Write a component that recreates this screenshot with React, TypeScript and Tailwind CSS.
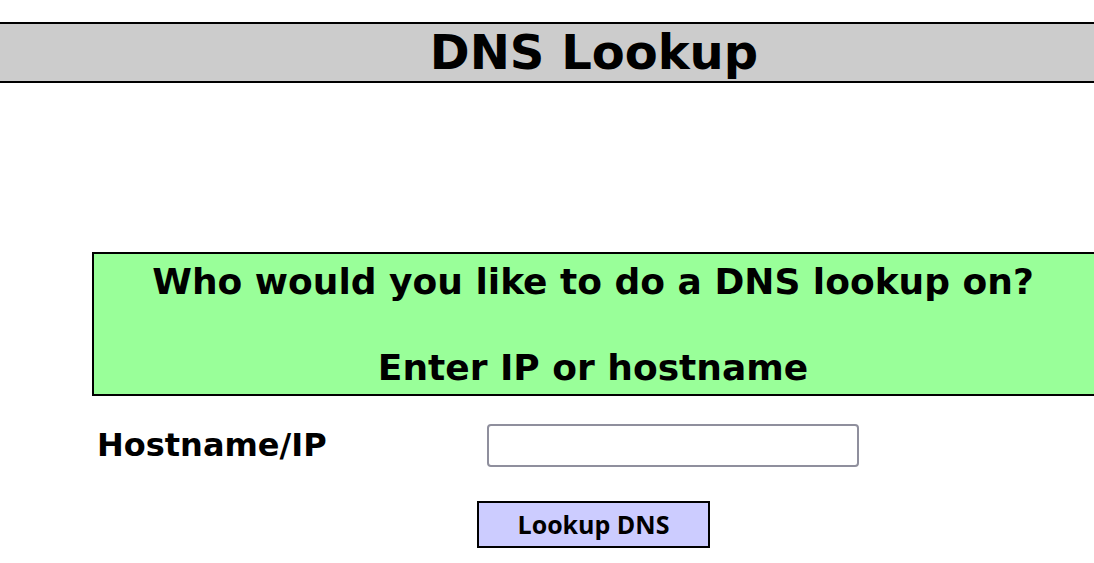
export default function App() {
  return (
    <div className="h-[563px] w-full overflow-hidden bg-white font-['DejaVu_Sans',sans-serif] text-black">
      <div className="w-[1188px]">
        <header className="mt-[22px] border-y-2 border-black bg-[#cccccc] text-center text-[48px] font-bold leading-[57px]">
          DNS Lookup
        </header>

        <div className="ml-[92px] mt-[169px] w-[1006px] border-2 border-black bg-[#99ff99] pb-[5px] pr-[4px] pt-[6px] text-center text-[36px] font-bold leading-[43px]">
          <p>Who would you like to do a DNS lookup on?</p>
          <p>&nbsp;</p>
          <p>Enter IP or hostname</p>
        </div>

        <form className="mt-[28px]" onSubmit={(e) => e.preventDefault()}>
          <div className="flex h-[43px] items-center">
            <label htmlFor="host" className="ml-[97px] w-[390px] text-[32px] font-bold leading-[43px]">
              Hostname/IP
            </label>
            <input
              id="host"
              type="text"
              className="h-[43px] w-[372px] rounded-[4px] border-2 border-[#8f8f9d] bg-white px-2 text-base"
            />
          </div>
          <button
            type="submit"
            className="ml-[477px] mt-[34px] h-[47px] w-[233px] border-2 border-black bg-[#ccccff] font-['Open_Sans',sans-serif] text-[25px] font-bold leading-[43px]"
          >
            Lookup DNS
          </button>
        </form>
      </div>
    </div>
  );
}
